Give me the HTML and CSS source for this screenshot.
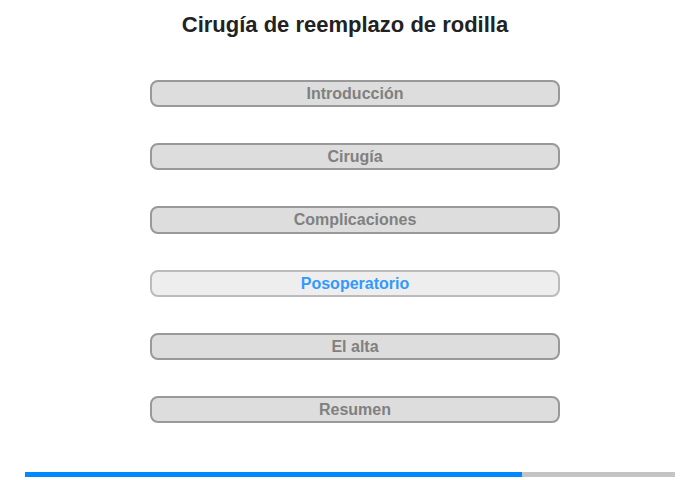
FILE: index.html
```html
<!DOCTYPE html>
<html lang="es">
<head>
<meta charset="utf-8">
<title>Cirugía de reemplazo de rodilla</title>
<link rel="stylesheet" href="styles.css">
</head>
<body>
<div class="page">
  <h1 class="title">Cirugía de reemplazo de rodilla</h1>
  <nav class="menu">
    <div class="item">Introducción</div>
    <div class="item">Cirugía</div>
    <div class="item">Complicaciones</div>
    <div class="item active">Posoperatorio</div>
    <div class="item">El alta</div>
    <div class="item">Resumen</div>
  </nav>
  <div class="progress"><div class="progress-fill" style="width: 76.4%"></div></div>
</div>
</body>
</html>
```
FILE: styles.css
```css
html, body {
  margin: 0;
  padding: 0;
  background: #ffffff;
}
.page {
  width: 700px;
  height: 480px;
  font-family: "Liberation Sans", Arial, sans-serif;
  display: flex;
  flex-direction: column;
}
.title {
  margin: 12px 0 0 0;
  padding-right: 10px;
  font-size: 22px;
  line-height: 25px;
  font-weight: bold;
  color: #222222;
  text-align: center;
}
.menu {
  display: flex;
  flex-direction: column;
  gap: 36px;
  margin: 43px 140px 0 150px;
}
.item {
  box-sizing: border-box;
  height: 27.2px;
  border: 2px solid #999999;
  border-radius: 8px;
  background: #dddddd;
  color: #808080;
  font-size: 16px;
  font-weight: bold;
  line-height: 23px;
  text-align: center;
}
.item.active {
  background: #eeeeee;
  border-color: #bbbbbb;
  color: #3399ff;
}
.progress {
  margin: 49px 25px 0 25px;
  height: 5px;
  background: #c4c4c4;
}
.progress-fill {
  height: 100%;
  background: #0088ff;
}
```
